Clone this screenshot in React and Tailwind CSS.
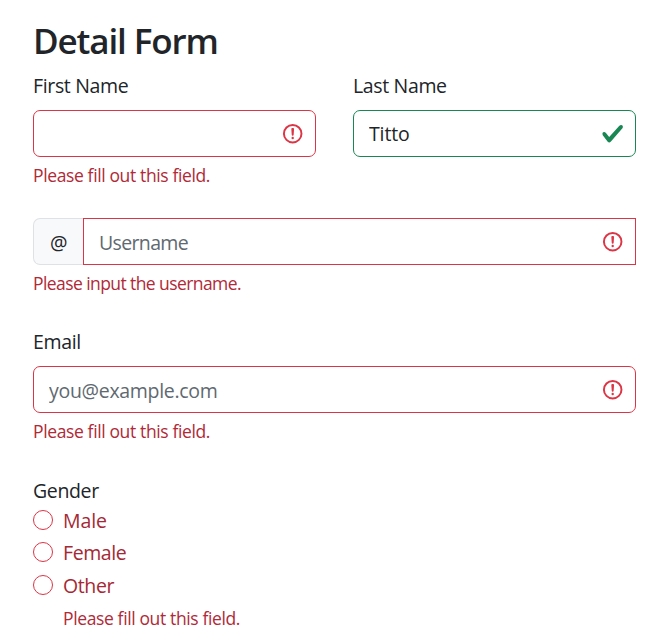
function InvalidIcon() {
  return (
    <svg className="pointer-events-none mr-[11px] h-[23.4px] w-[23.4px] shrink-0" viewBox="0 0 12 12" fill="none" stroke="#dc3545">
      <circle cx="6" cy="6" r="4.5" />
      <path strokeLinejoin="round" d="M5.8 3.6h.4L6 6.5z" />
      <circle cx="6" cy="8.2" r=".6" fill="#dc3545" stroke="none" />
    </svg>
  );
}

function ValidIcon() {
  return (
    <svg className="pointer-events-none mr-[11px] h-[23.4px] w-[23.4px] shrink-0" viewBox="0 0 8 8">
      <path fill="#198754" d="M2.3 6.73.6 4.53c-.4-1.04.46-1.4 1.1-.8l1.1 1.4 3.4-3.8c.6-.63 1.6-.27 1.2.7l-4 4.6c-.43.5-.8.4-1.1.1z" />
    </svg>
  );
}

function Field({ valid = false, className = "rounded-[7px]", inputClass = "tracking-[-0.12px]", ...props }) {
  return (
    <div className={`flex h-[47px] min-w-0 flex-1 items-center border ${valid ? "border-[#198754]" : "border-[#dc3545]"} ${className}`}>
      <input
        className={`h-full min-w-0 flex-1 bg-transparent pl-[15px] outline-none placeholder:text-[#606970] ${inputClass}`}
        {...props}
      />
      {valid ? <ValidIcon /> : <InvalidIcon />}
    </div>
  );
}

function Label({ children }) {
  return <div className="h-9 leading-6">{children}</div>;
}

function Feedback({ spacing = "tracking-[-0.37px]", children }) {
  return <p className={`pt-[6px] text-[17.5px] leading-[25px] text-[#b02a37] ${spacing}`}>{children}</p>;
}

function Radio({ label, height = "h-[33px]", spacing = "tracking-[-0.1px]" }) {
  return (
    <label className={`flex items-start gap-[10px] text-[#a52834] ${height}`}>
      <input type="radio" name="gender" className="h-5 w-5 appearance-none rounded-full border border-[#dc3545]" />
      <span className={`-mt-px leading-6 ${spacing}`}>{label}</span>
    </label>
  );
}

export default function App() {
  return (
    <main className="h-[640px] w-[670px] overflow-hidden bg-white pt-5 pr-[34px] pl-[33px] font-['Open_Sans','Noto_Sans',sans-serif] text-[19.5px] tracking-[-0.35px] text-[#212529]">
      <h1 className="h-[54px] text-[35px] leading-[41px] font-semibold tracking-[-1.13px]">Detail Form</h1>
      <div className="grid h-36 grid-cols-2 gap-x-[37px]">
        <div>
          <Label>First Name</Label>
          <Field />
          <Feedback>Please fill out this field.</Feedback>
        </div>
        <div>
          <Label>Last Name</Label>
          <Field valid defaultValue="Titto" />
        </div>
      </div>
      <div className="h-28">
        <div className="flex">
          <div className="flex h-[47px] w-[50px] items-center justify-center rounded-l-[7px] border border-r-0 border-[#dee2e6] bg-[#f8f9fa] pt-[2px]">
            @
          </div>
          <Field className="rounded-none" inputClass="pt-[2px] tracking-[-0.65px]" placeholder="Username" />
        </div>
        <Feedback spacing="tracking-[-0.58px]">Please input the username.</Feedback>
      </div>
      <div className="h-[149px]">
        <Label>Email</Label>
        <Field inputClass="pt-[2px] tracking-[-0.3px]" placeholder="you@example.com" />
        <Feedback>Please fill out this field.</Feedback>
      </div>
      <div>
        <div className="h-[31px] leading-6">Gender</div>
        <Radio label="Male" height="h-8" />
        <Radio label="Female" spacing="tracking-[-0.4px]" />
        <Radio label="Other" spacing="tracking-[-0.4px]" />
        <p className="-mt-[2px] pl-[30px] text-[17.5px] leading-[25px] tracking-[-0.37px] text-[#b02a37]">
          Please fill out this field.
        </p>
      </div>
    </main>
  );
}
